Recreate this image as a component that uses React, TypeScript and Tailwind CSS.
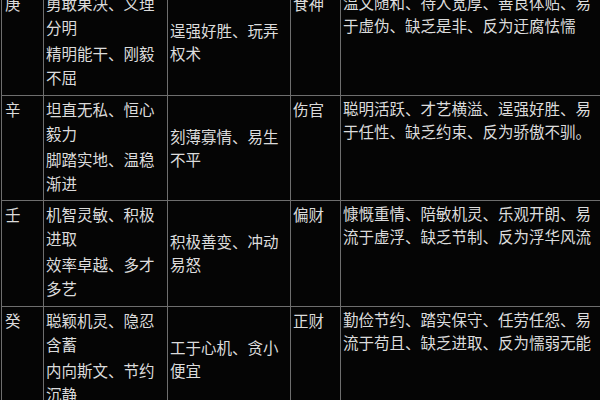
import React from "react";

const rows = [
  {
    gan: "庚",
    good: ["勇敢果决、义理分明", "精明能干、刚毅不屈"],
    bad: "逞强好胜、玩弄权术",
    god: "食神",
    desc: "温文随和、待人宽厚、善良体贴、易于虚伪、缺乏是非、反为迂腐怯懦",
  },
  {
    gan: "辛",
    good: ["坦直无私、恒心毅力", "脚踏实地、温稳渐进"],
    bad: "刻薄寡情、易生不平",
    god: "伤官",
    desc: "聪明活跃、才艺横溢、逞强好胜、易于任性、缺乏约束、反为骄傲不驯。",
  },
  {
    gan: "壬",
    good: ["机智灵敏、积极进取", "效率卓越、多才多艺"],
    bad: "积极善变、冲动易怒",
    god: "偏财",
    desc: "慷慨重情、陪敏机灵、乐观开朗、易流于虚浮、缺乏节制、反为浮华风流",
  },
  {
    gan: "癸",
    good: ["聪颖机灵、隐忍含蓄", "内向斯文、节约沉静"],
    bad: "工于心机、贪小便宜",
    god: "正财",
    desc: "勤俭节约、踏实保守、任劳任怨、易流于苟且、缺乏进取、反为懦弱无能",
  },
];

export default function App() {
  return (
    <div
      className="w-[600px] h-[400px] overflow-hidden bg-[#050505] text-[#dcdcdc]"
      style={{ fontFamily: '"Noto Sans CJK SC", "Noto Sans", sans-serif' }}
    >
      <div className="-mt-[10px] ml-px w-[620px] border-l border-[#6e6e6e] grid grid-cols-[42px_124px_123px_50px_281px] text-[15.5px] leading-[24px]">
        {rows.map((r) => (
          <React.Fragment key={r.gan}>
            <div className="h-[105.5px] border-r border-b border-[#6e6e6e] pl-[3px] pt-[1px]">
              {r.gan}
            </div>
            <div className="h-[105.5px] border-r border-b border-[#6e6e6e] pl-[2px] pr-[6px] pt-[1px] flex flex-col gap-[2px]">
              {r.good.map((g) => (
                <div key={g}>{g}</div>
              ))}
            </div>
            <div className="h-[105.5px] border-r border-b border-[#6e6e6e] pl-[2px] pr-[6px] flex items-center leading-[23px]">
              <div>{r.bad}</div>
            </div>
            <div className="h-[105.5px] border-r border-b border-[#6e6e6e] pl-[2px] pt-[1px]">
              {r.god}
            </div>
            <div className="h-[105.5px] border-b border-[#6e6e6e] pl-[2px] pr-[22px] pt-[1px] leading-[23px]">
              {r.desc}
            </div>
          </React.Fragment>
        ))}
      </div>
    </div>
  );
}
